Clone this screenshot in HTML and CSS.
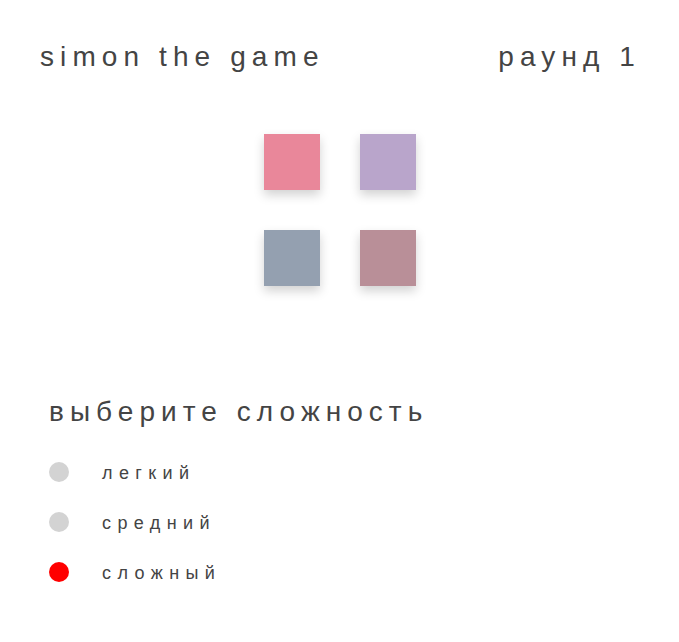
FILE: index.html
```html
<!DOCTYPE html>
<html lang="ru">
<head>
<meta charset="utf-8">
<title>simon the game</title>
<link rel="stylesheet" href="styles.css">
</head>
<body>
<header class="header">
  <h1 class="title">simon the game</h1>
  <div class="round">раунд 1</div>
</header>
<main class="board">
  <div class="pad pad-red"></div>
  <div class="pad pad-violet"></div>
  <div class="pad pad-blue"></div>
  <div class="pad pad-mauve"></div>
</main>
<section class="levels">
  <h2 class="levels-title">выберите сложность</h2>
  <ul class="level-list">
    <li class="level"><span class="dot"></span><span class="level-name">легкий</span></li>
    <li class="level"><span class="dot"></span><span class="level-name">средний</span></li>
    <li class="level"><span class="dot dot-active"></span><span class="level-name">сложный</span></li>
  </ul>
</section>
</body>
</html>
```

FILE: styles.css
```css
* { box-sizing: border-box; }
html, body { margin: 0; padding: 0; background: #fff; }
body {
  font-family: "Liberation Sans", Arial, sans-serif;
  color: #444;
  width: 679px;
}
.header {
  display: flex;
  justify-content: space-between;
  align-items: center;
  padding: 38px 38px 0 40px;
  height: 76px;
}
.title, .round {
  margin: 0;
  font-size: 28px;
  font-weight: normal;
  letter-spacing: 6.1px;
  line-height: 38px;
}
.board {
  display: grid;
  grid-template-columns: 56px 56px;
  grid-auto-rows: 56px;
  gap: 40px;
  justify-content: center;
  margin-top: 58px;
}
.pad { box-shadow: 0 5px 10px rgba(0,0,0,0.18); }
.pad-red { background: #e9879a; }
.pad-violet { background: #b9a5cb; }
.pad-blue { background: #94a0b0; }
.pad-mauve { background: #b98f98; }
.levels { padding: 0 0 0 49px; margin-top: 108px; }
.levels-title {
  margin: 0;
  font-size: 28px;
  font-weight: normal;
  letter-spacing: 6.05px;
  line-height: 36px;
}
.level-list { list-style: none; margin: 32px 0 0; padding: 0; display: flex; flex-direction: column; gap: 30px; }
.level { display: flex; align-items: center; height: 20px; }
.dot { width: 20px; height: 20px; border-radius: 50%; background: #d3d3d3; margin-right: 33px; }
.dot-active { background: #f00; }
.level-name { font-size: 18px; letter-spacing: 6.4px; line-height: 20px; padding-top: 2px; }
```
